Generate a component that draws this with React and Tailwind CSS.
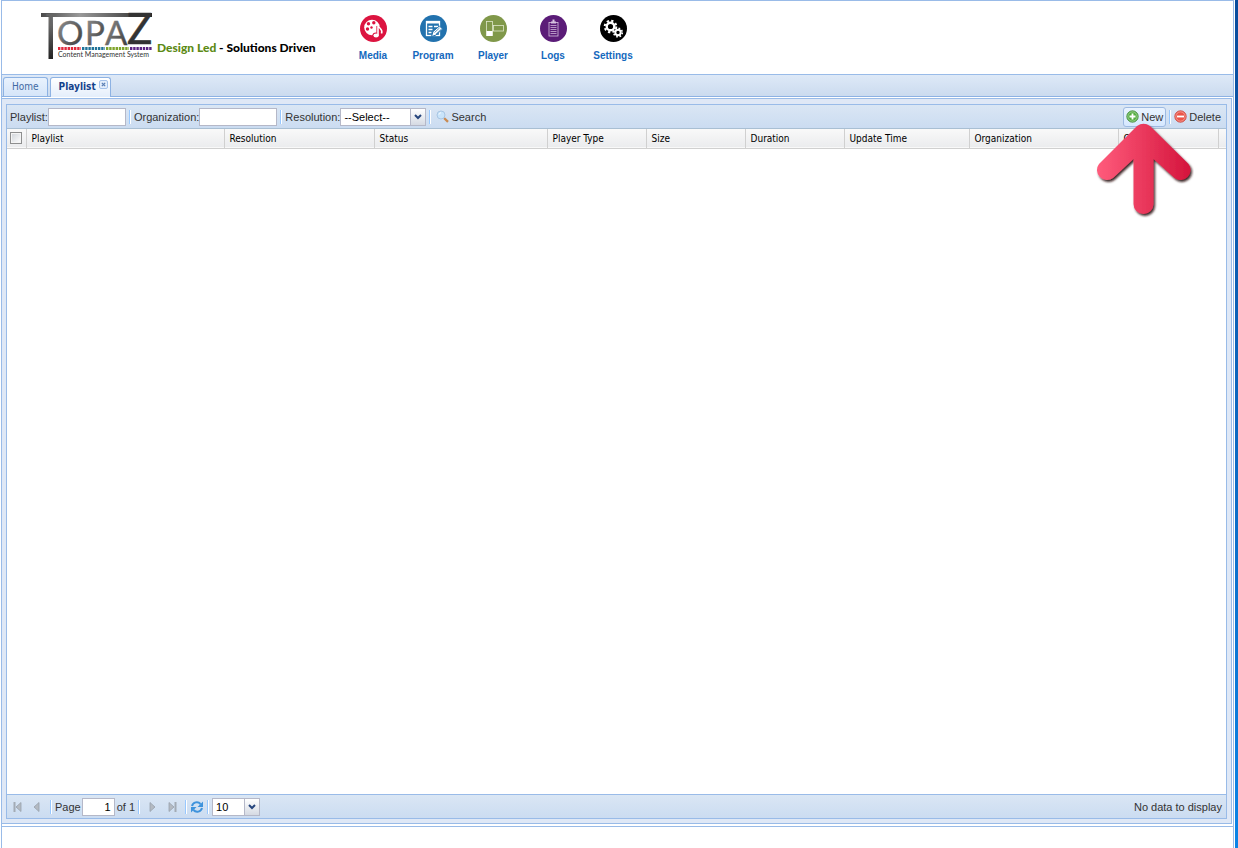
import React, { useState } from 'react';

const columns = [
  { name: 'Playlist', width: 'w-[198px]' },
  { name: 'Resolution', width: 'w-[150px]' },
  { name: 'Status', width: 'w-[173px]' },
  { name: 'Player Type', width: 'w-[99px]' },
  { name: 'Size', width: 'w-[99px]' },
  { name: 'Duration', width: 'w-[99px]' },
  { name: 'Update Time', width: 'w-[125px]' },
  { name: 'Organization', width: 'w-[149px]' },
  { name: 'Owner', width: 'w-[100px]' }
];

const Logo = () => (
  <svg viewBox="0 -10 114 60" className="h-[60px] w-[114px] shrink-0" role="img" aria-label="TOPAZ Content Management System">
    <defs>
      <linearGradient id="bar" x1="0" x2="1" y1="0" y2="0">
        <stop offset="0" stopColor="#4a4a4a" />
        <stop offset="0.35" stopColor="#999" />
        <stop offset="1" stopColor="#262626" />
      </linearGradient>
      <linearGradient id="steel" x1="0" x2="1" y1="0" y2="1">
        <stop offset="0" stopColor="#999" />
        <stop offset="1" stopColor="#333" />
      </linearGradient>
      <linearGradient id="stem" x1="0" x2="0" y1="0" y2="1">
        <stop offset="0" stopColor="#777" />
        <stop offset="1" stopColor="#222" />
      </linearGradient>
    </defs>
    <rect x="1" y="2" width="111" height="4" fill="url(#bar)" />
    <rect x="8.5" y="6" width="4.5" height="42" fill="url(#stem)" />
    <g fontFamily="Lato, sans-serif">
      <text x="6" y="14" fontSize="16" fontWeight="700" fill="#666">T</text>
      <g fontSize="33" fontWeight="400" fill="url(#steel)" stroke="url(#steel)" strokeWidth=".4">
        <text x="17" y="34">O</text>
        <text x="45" y="34">P</text>
        <text x="65" y="34">A</text>
      </g>
      <text x="87" y="33" fontSize="42" fontWeight="400" fill="#333" stroke="#333" strokeWidth=".6">Z</text>
      <text x="18" y="46" fontSize="7" fill="#333">Content Management System</text>
    </g>
    <g strokeWidth="3" strokeDasharray="2.4 .8">
      <path d="M18 37.5h23" stroke="#e02a3c" />
      <path d="M42 37.5h23" stroke="#1f7399" />
      <path d="M66 37.5h23" stroke="#7fa42c" />
      <path d="M90 37.5h22" stroke="#5c2483" />
    </g>
  </svg>
);

const MediaIcon = () => (
  <svg viewBox="0 0 27 27" className="size-[27px]" aria-hidden="true">
    <circle cx="13.5" cy="13.5" r="13.5" fill="#dc1440" />
    <circle cx="12" cy="12.5" r="7.8" fill="#fff" />
    <circle cx="8.5" cy="8.8" r="1.7" fill="#dc1440" />
    <circle cx="13.8" cy="7.8" r="1.7" fill="#dc1440" />
    <circle cx="7.5" cy="14" r="1.7" fill="#dc1440" />
    <circle cx="11.5" cy="12.5" r="1.2" fill="#dc1440" />
    <path d="M18 20.5V11c.5 3 4.500 3 3 7.500" fill="none" stroke="#dc1440" strokeWidth="3.2" />
    <ellipse cx="16" cy="20.3" rx="3.6" ry="2.9" fill="#dc1440" />
    <path d="M18 20.5V10c.5 3.500 5.500 4 3.500 8.500" fill="none" stroke="#fff" strokeWidth="1.6" />
    <ellipse cx="16.1" cy="20.4" rx="2.7" ry="2" fill="#fff" />
  </svg>
);

const ProgramIcon = () => (
  <svg viewBox="0 0 27 27" className="size-[27px]" aria-hidden="true">
    <circle cx="13.5" cy="13.5" r="13.5" fill="#2272ae" />
    <rect x="6.5" y="6.5" width="13" height="14" fill="none" stroke="#fff" strokeWidth="1.3" />
    <path d="M6 7.5h14" stroke="#fff" strokeWidth="2" />
    <path d="M8.5 11.5h4M14 11.5h4M8.5 14.5h4M8.5 17.5h3" stroke="#fff" strokeWidth="1.5" />
    <path d="m11.5 21.5 1.5-5 6.5-5.5 3 3-6.5 6Z" fill="#fff" stroke="#2272ae" />
    <path d="m14.5 17.5 5-4.5M16 19l5-4.5" stroke="#2272ae" strokeWidth=".7" />
  </svg>
);

const PlayerIcon = () => (
  <svg viewBox="0 0 27 27" className="size-[27px]" aria-hidden="true">
    <circle cx="13.5" cy="13.5" r="13.5" fill="#80984a" />
    <rect x="6.5" y="6.5" width="6" height="14" fill="none" stroke="#dfe6cb" strokeWidth=".8" />
    <rect x="6.5" y="16" width="6" height="5" fill="#fff" />
    <rect x="13.5" y="10.5" width="10" height="5.5" fill="none" stroke="#dfe6cb" strokeWidth=".8" />
  </svg>
);

const LogsIcon = () => (
  <svg viewBox="0 0 27 27" className="size-[27px]" aria-hidden="true">
    <circle cx="13.5" cy="13.5" r="13.5" fill="#5b1c78" />
    <rect x="9" y="7.5" width="9" height="13.5" fill="none" stroke="#d6c3df" strokeWidth=".8" />
    <path d="M11 7.5h5M12.5 5.5h2" stroke="#d6c3df" strokeWidth="2" />
    <path d="M10.5 10.5h6M10.5 12.5h6M10.5 14.5h6M10.5 16.5h6M10.5 18.5h6" stroke="#b796c5" />
  </svg>
);

const SettingsIcon = () => (
  <svg viewBox="0 0 27 27" className="size-[27px]" aria-hidden="true">
    <circle cx="13.5" cy="13.5" r="13.5" fill="#000" />
    <g fill="none" stroke="#fff">
      <circle cx="10.5" cy="11.5" r="3.8" strokeWidth="2.4" />
      <circle cx="10.5" cy="11.5" r="5.8" strokeWidth="2" strokeDasharray="2.28 2.28" />
      <circle cx="18" cy="17.5" r="2.7" strokeWidth="2" />
      <circle cx="18" cy="17.5" r="4.3" strokeWidth="1.6" strokeDasharray="1.69 1.69" />
    </g>
  </svg>
);

const SearchIcon = () => (
  <svg viewBox="0 0 13 13" className="size-[13px]" aria-hidden="true">
    <path d="m8 8 4 3.8" stroke="#c98b52" strokeWidth="2.4" />
    <circle cx="5" cy="5" r="4" fill="#c9e4fa" stroke="#a9c6e3" />
    <path d="M3 4.5C3.3 3.3 4 3 5 2.8" fill="none" stroke="#fff" />
  </svg>
);

const RoundIcon = ({ color, edge, plus }) => (
  <svg viewBox="0 0 13 13" className="size-[13px]" aria-hidden="true">
    <circle cx="6.5" cy="6.5" r="5.7" fill={color} stroke={edge} strokeWidth=".8" />
    <circle cx="6.5" cy="6.5" r="4.7" fill="none" stroke="#fff" strokeOpacity=".5" strokeWidth=".8" />
    <path d={plus ? 'M3.5 6.5h6M6.5 3.5v6' : 'M3 6.5h7'} stroke="#fff" strokeWidth="1.8" />
  </svg>
);

const RefreshIcon = () => (
  <svg viewBox="0 0 14 14" className="size-[14px]" aria-hidden="true">
    <g fill="none" stroke="#3f93dc" strokeWidth="2">
      <path d="M2 6C3 2 8 1 10.5 4" />
      <path d="M12 8c-1 4-6 5-8.5 2" />
    </g>
    <path d="M13 1.5V7H7.5ZM1 12.5V7h5.5Z" fill="#3f93dc" />
  </svg>
);

const PageIcon = ({ flip, end }) => (
  <svg viewBox="0 0 12 12" className={`size-[12px] ${flip ? '-scale-x-100' : ''}`} aria-hidden="true">
    <path d="M3 1.5v9L8 6Z" fill="#b4bac2" stroke="#98a1ac" strokeWidth=".8" />
    {end && <path d="M9.5 1v10" stroke="#a3abb5" strokeWidth="2" />}
  </svg>
);

const Arrow = () => (
  <svg viewBox="0 0 98 96" className="pointer-events-none absolute top-full left-1/2 z-10 -mt-1 h-[96px] w-[98px] -translate-x-1/2" aria-hidden="true">
    <defs>
      <linearGradient id="arrow" x1="0" x2="1" y1="0" y2="0">
        <stop offset="0" stopColor="#ff5c7c" />
        <stop offset="1" stopColor="#d4143c" />
      </linearGradient>
      <filter id="shade" x="-10%" y="-10%" width="125%" height="125%">
        <feDropShadow dx="1.5" dy="2" stdDeviation=".8" floodColor="#2b1010" floodOpacity=".9" />
      </filter>
    </defs>
    <path
      d="M41 3Q47.5-1.5 54 3L92.500 41A10 10 0 0 1 78.500 55L57.500 36V81A10 10 0 0 1 37.500 81V36L17 55A10 10 0 0 1 3 41Z"
      fill="url(#arrow)"
      filter="url(#shade)"
    />
  </svg>
);

const Separator = () => <span className="mx-[3px] h-[14px] w-[2px] shrink-0 border-l border-[#98c8ff] bg-white" />;

const Combo = ({ id, label, options, width }) => (
  <span className={`relative flex h-[18px] ${width}`}>
    <select
      id={id}
      aria-label={label}
      className="h-full w-full appearance-none border border-[#b5b8c8] bg-white pl-[3px] text-[11px] text-black outline-none"
    >
      {options.map((option) => (
        <option key={option}>{option}</option>
      ))}
    </select>
    <span className="pointer-events-none absolute inset-y-0 right-0 flex w-[16px] items-center justify-center border border-[#b5b8c8] bg-linear-to-b from-white to-[#d5dae3]">
      <svg viewBox="0 0 8 6" className="h-[6px] w-[8px]" aria-hidden="true">
        <path d="m1 1 3 3 3-3" fill="none" stroke="#26457d" strokeWidth="2" />
      </svg>
    </span>
  </span>
);

const navItems = [
  { name: 'Media', icon: MediaIcon },
  { name: 'Program', icon: ProgramIcon },
  { name: 'Player', icon: PlayerIcon },
  { name: 'Logs', icon: LogsIcon },
  { name: 'Settings', icon: SettingsIcon }
];

const App = () => {
  const [page, setPage] = useState('1');

  return (
    <div className="flex min-h-screen bg-white font-['Liberation_Sans',sans-serif] text-[11px] leading-[14px] text-[#333]">
      <div className="ml-px flex min-w-0 flex-1 flex-col border-x border-[#99bbe8]">
        {/* Header */}
        <header className="flex h-[75px] shrink-0 items-start border-y border-[#99bbe8] pl-[38px]">
          <div className="flex w-[303px]">
            <Logo />
            <p className="ml-[3px] mt-[40px] whitespace-nowrap font-[Lato,sans-serif] text-[12px] font-black text-black">
              <span className="text-[#5c8a14]">Design Led</span> - Solutions Driven
            </p>
          </div>
          <nav className="flex pt-[14px]">
            {navItems.map((item) => {
              const Icon = item.icon;
              return (
                <a key={item.name} href="#" className="flex w-[60px] flex-col items-center gap-[7px] text-[10px] font-bold text-[#1468bd]">
                  <Icon />
                  {item.name}
                </a>
              );
            })}
          </nav>
        </header>

        {/* Tabs */}
        <div className="flex h-[22px] shrink-0 items-end gap-[2px] border-b border-[#8db2e3] bg-linear-to-b from-[#dee9f7] to-[#cbdbef] pl-px font-['DejaVu_Sans_Condensed','DejaVu_Sans',sans-serif] text-[10px]">
          <button className="h-[19px] rounded-t-[3px] border border-b-0 border-[#8db2e3] bg-linear-to-b from-[#e9f2fd] to-[#d5e5f9] px-2 text-[#416aa3]">
            Home
          </button>
          <div className="-mb-px flex h-[20px] gap-[3px] rounded-t-[3px] border border-b-0 border-[#8db2e3] bg-linear-to-b from-white to-[#e4eefb] pb-px pl-2 pr-[2px]">
            <button className="font-bold text-[#15428b]">Playlist</button>
            <button aria-label="Close Playlist" className="mt-[2px] flex size-[9px] items-center justify-center rounded-[2px] border border-[#a5c2ea] bg-[#e4eefb]">
              <svg viewBox="0 0 6 6" className="size-[5px]" aria-hidden="true">
                <path d="m1 1 4 4M5 1 1 5" stroke="#5b7fb5" strokeWidth="1.5" />
              </svg>
            </button>
          </div>
        </div>

        {/* Content */}
        <main className="mt-px mr-px flex flex-1 flex-col border border-l-0 border-[#99bbe8] bg-[#dfe8f6] pt-[5px] pr-1 pb-1 pl-1">
          <section className="flex flex-1 flex-col border border-[#99bbe8] bg-white">
            <div className="flex h-[24px] shrink-0 items-center border-b border-[#a9bfd3] bg-linear-to-b from-[#dae6f4] to-[#cbdcf1] px-[3px]">
              <label htmlFor="playlist">Playlist:</label>
              <input id="playlist" className="h-[18px] w-[78px] border border-[#b5b8c8] bg-white px-1 outline-none" />
              <Separator />
              <label htmlFor="organization">Organization:</label>
              <input id="organization" className="h-[18px] w-[78px] border border-[#b5b8c8] bg-white px-1 outline-none" />
              <Separator />
              <label htmlFor="resolution">Resolution:</label>
              <Combo id="resolution" options={['--Select--']} width="w-[86px]" />
              <Separator />
              <button className="flex items-center gap-[2px] pl-[2px]">
                <SearchIcon />
                Search
              </button>
              <div className="relative ml-auto">
                <button className="flex h-[20px] items-center gap-[2px] rounded-[3px] border border-[#9ebae1] bg-linear-to-b from-[#e9f3ff] to-[#d6e8ff] px-[2px]">
                  <RoundIcon color="#55ae42" edge="#398431" plus />
                  New
                </button>
                <Arrow />
              </div>
              <Separator />
              <button className="flex items-center gap-[2px] pr-[2px]">
                <RoundIcon color="#ec5548" edge="#c93b32" />
                Delete
              </button>
            </div>

            <table className="w-full table-fixed border-collapse font-['DejaVu_Sans_Condensed','DejaVu_Sans',sans-serif] text-[10px] text-black">
              <thead>
                <tr className="h-[19px] border-b border-[#d0d0d0] bg-linear-to-b from-[#f9f9f9] to-[#ebecee]">
                  <th className="w-[19px] border-r border-[#d0d0d0] p-0">
                    <input
                      type="checkbox"
                      aria-label="Select all playlists"
                      className="mx-auto block size-[12px] appearance-none border border-[#8e8f8f] bg-linear-to-br from-[#cfd3d8] to-white shadow-[inset_0_0_0_1px_#f4f4f4] checked:from-[#4b6b9a]"
                    />
                  </th>
                  {columns.map((column) => (
                    <th key={column.name} className={`border-r border-[#d0d0d0] pt-[2px] pb-0 pl-[5px] text-left font-normal ${column.width}`}>
                      {column.name}
                    </th>
                  ))}
                  <th className="p-0"></th>
                </tr>
              </thead>
              <tbody></tbody>
            </table>

            {/* Paging toolbar */}
            <footer className="mt-auto flex h-[24px] shrink-0 items-center border-t border-[#99bbe8] bg-linear-to-b from-[#dae6f4] to-[#cbdcf1] px-1">
              <div className="flex items-center gap-[6px] px-px">
                <button aria-label="First page"><PageIcon flip end /></button>
                <button aria-label="Previous page"><PageIcon flip /></button>
              </div>
              <span className="w-1" />
              <Separator />
              <label htmlFor="page" className="mr-px">Page</label>
              <input
                id="page"
                value={page}
                onChange={(e) => setPage(e.target.value)}
                className="mr-[2px] h-[18px] w-[33px] border border-[#b5b8c8] bg-white px-[3px] text-right text-black outline-none"
              />
              of 1
              <Separator />
              <div className="flex items-center gap-[7px] px-1">
                <button aria-label="Next page"><PageIcon /></button>
                <button aria-label="Last page"><PageIcon end /></button>
              </div>
              <Separator />
              <button aria-label="Refresh"><RefreshIcon /></button>
              <Separator />
              <Combo id="page-size" label="Rows per page" options={['10', '20', '50']} width="w-[48px]" />
              <span className="ml-auto">No data to display</span>
            </footer>
          </section>
        </main>

        <div className="mt-[2px] h-[22px] shrink-0 border-t border-[#99bbe8]" />
      </div>
      <div className="ml-px w-[3px] shrink-0 bg-linear-to-b from-[#0a4c9c] to-[#0a84e6]" />
    </div>
  );
};

export default App;
